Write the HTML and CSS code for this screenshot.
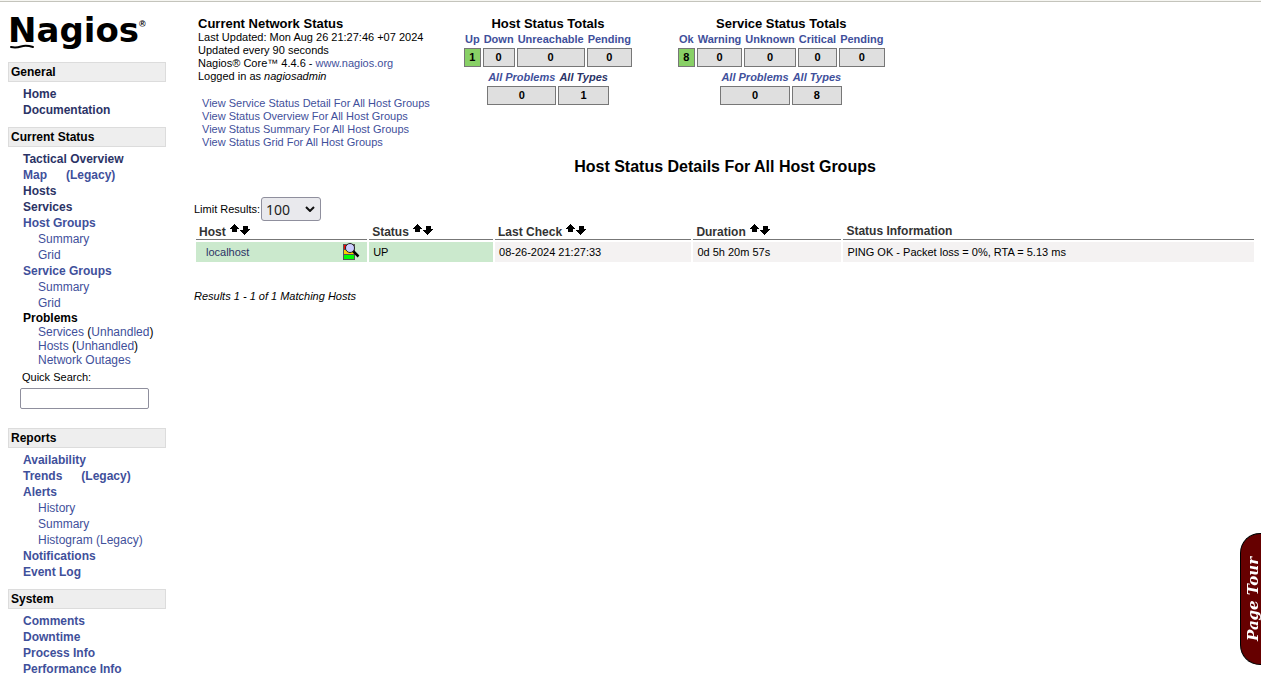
FILE: index.html
```html
<!DOCTYPE html>
<html lang="en">
<head>
<meta charset="utf-8">
<title>Nagios: Host Status</title>
<link rel="stylesheet" href="styles.css">
</head>
<body>
<svg class="defs" aria-hidden="true">
  <symbol id="sort" viewBox="0 0 22 14" shape-rendering="crispEdges">
    <path d="M5 1h1v1h1v1h1v1h1v1h1v1h-2v3h-5v-3h-2v-1h1v-1h1v-1h1v-1h1z"/>
    <path d="M14 3h5v3h2v1h-1v1h-1v1h-1v1h-1v1h-1v1h-1v-1h-1v-1h-1v-1h-1v-1h-1v-1h3z"/>
  </symbol>
</svg>
<div class="page">
  <nav class="side">
    <a class="logo" href="#" aria-label="Nagios">
      <svg width="140" height="38" viewBox="0 0 140 38">
        <text class="logo-name" x="0" y="28">Nagios</text>
        <text class="logo-mark" x="131" y="13">®</text>
        <path class="logo-line" d="M3 33q5 1 10-.5t12 .5"/>
      </svg>
    </a>
    <h2>General</h2>
    <ul>
      <li><a class="visited" href="#">Home</a></li>
      <li><a class="visited" href="#">Documentation</a></li>
    </ul>
    <h2>Current Status</h2>
    <ul class="status-menu">
      <li><a class="visited" href="#">Tactical Overview</a></li>
      <li class="pair"><a href="#">Map</a><a href="#">(Legacy)</a></li>
      <li><a class="visited" href="#">Hosts</a></li>
      <li><a class="visited" href="#">Services</a></li>
      <li><a href="#">Host Groups</a>
        <ul><li><a href="#">Summary</a></li><li><a href="#">Grid</a></li></ul></li>
      <li><a href="#">Service Groups</a>
        <ul><li><a href="#">Summary</a></li><li><a href="#">Grid</a></li></ul></li>
      <li class="tight">Problems
        <ul>
          <li><a href="#">Services</a> (<a href="#">Unhandled</a>)</li>
          <li><a href="#">Hosts</a> (<a href="#">Unhandled</a>)</li>
          <li><a href="#">Network Outages</a></li>
        </ul></li>
    </ul>
    <form class="search">
      <label for="q">Quick Search:</label>
      <input id="q" type="text">
    </form>
    <h2>Reports</h2>
    <ul>
      <li><a href="#">Availability</a></li>
      <li class="pair"><a href="#">Trends</a><a href="#">(Legacy)</a></li>
      <li><a href="#">Alerts</a>
        <ul><li><a href="#">History</a></li><li><a href="#">Summary</a></li><li><a href="#">Histogram (Legacy)</a></li></ul></li>
      <li><a href="#">Notifications</a></li>
      <li><a href="#">Event Log</a></li>
    </ul>
    <h2>System</h2>
    <ul>
      <li><a href="#">Comments</a></li>
      <li><a href="#">Downtime</a></li>
      <li><a href="#">Process Info</a></li>
      <li><a href="#">Performance Info</a></li>
    </ul>
  </nav>
  <main>
    <header class="top">
      <section class="info">
        <h3>Current Network Status</h3>
        <p>Last Updated: Mon Aug 26 21:27:46 +07 2024</p>
        <p>Updated every 90 seconds</p>
        <p>Nagios® Core™ 4.4.6 - <a href="#">www.nagios.org</a></p>
        <p>Logged in as <em>nagiosadmin</em></p>
        <div class="views">
          <a href="#">View Service Status Detail For All Host Groups</a>
          <a href="#">View Status Overview For All Host Groups</a>
          <a href="#">View Status Summary For All Host Groups</a>
          <a href="#">View Status Grid For All Host Groups</a>
        </div>
      </section>
      <section class="totals">
        <h3>Host Status Totals</h3>
        <table>
          <tr><th><a href="#">Up</a></th><th><a href="#">Down</a></th><th><a href="#">Unreachable</a></th><th><a href="#">Pending</a></th></tr>
          <tr><td class="good">1</td><td>0</td><td>0</td><td>0</td></tr>
        </table>
        <table class="all">
          <tr><th><a href="#">All Problems</a></th><th><a class="visited" href="#">All Types</a></th></tr>
          <tr><td>0</td><td>1</td></tr>
        </table>
      </section>
      <section class="totals">
        <h3>Service Status Totals</h3>
        <table>
          <tr><th><a href="#">Ok</a></th><th><a href="#">Warning</a></th><th><a href="#">Unknown</a></th><th><a href="#">Critical</a></th><th><a href="#">Pending</a></th></tr>
          <tr><td class="good">8</td><td>0</td><td>0</td><td>0</td><td>0</td></tr>
        </table>
        <table class="all">
          <tr><th><a href="#">All Problems</a></th><th><a href="#">All Types</a></th></tr>
          <tr><td>0</td><td>8</td></tr>
        </table>
      </section>
    </header>
    <h1>Host Status Details For All Host Groups</h1>
    <div class="limit">
      <label for="limit">Limit Results:</label>
      <span class="picker">
        <select id="limit"><option>50</option><option selected>100</option><option>250</option><option>All</option></select>
        <svg width="10" height="6" viewBox="0 0 10 6"><path d="M1 1l4 4 4-4"/></svg>
      </span>
    </div>
    <table class="hosts">
      <colgroup><col class="c-host"><col class="c-status"><col class="c-check"><col class="c-duration"><col></colgroup>
      <thead>
        <tr>
          <th>Host <svg class="sort"><use href="#sort"/></svg></th>
          <th>Status <svg class="sort"><use href="#sort"/></svg></th>
          <th>Last Check <svg class="sort"><use href="#sort"/></svg></th>
          <th>Duration <svg class="sort"><use href="#sort"/></svg></th>
          <th>Status Information</th>
        </tr>
      </thead>
      <tbody>
        <tr>
          <td class="up"><div class="name"><a class="visited" href="#">localhost</a>
            <svg width="18" height="18" viewBox="0 0 18 18">
              <g shape-rendering="crispEdges"><path fill="#555" d="M1 1h12v16H1z"/><path fill="#f00" d="M2 2h10v4H2z"/><path fill="#fc0" d="M2 7h10v4H2z"/><path fill="#0f0" d="M2 12h10v4H2z"/></g>
              <path d="M11 8l5.500 5.500" stroke="#000" stroke-width="2.500"/>
              <circle cx="8" cy="5" r="4.500" fill="#ccf" stroke="#222"/>
            </svg></div></td>
          <td class="up">UP</td>
          <td>08-26-2024 21:27:33</td>
          <td>0d 5h 20m 57s</td>
          <td>PING OK - Packet loss = 0%, RTA = 5.13 ms</td>
        </tr>
      </tbody>
    </table>
    <p class="results">Results 1 - 1 of 1 Matching Hosts</p>
  </main>
</div>
<button class="tour" type="button">Page Tour</button>
</body>
</html>
```
FILE: styles.css
```css
* { box-sizing: border-box; }
body {
  margin: 0;
  border-top: 1px solid #f6f6f2;
  font: 11px/13px "Liberation Sans", Arial, sans-serif;
  color: #000;
  background: #fff;
}
h1, h2, h3, p, ul { margin: 0; padding: 0; }
ul { list-style: none; }
a { color: #3f509b; text-decoration: none; }
a.visited { color: #2b3366; }
.defs { display: none; }
.page {
  display: grid;
  grid-template-columns: 158px minmax(0, 1fr);
  gap: 28px;
  height: calc(100vh - 1px);
  overflow: hidden;
  padding: 0 5px 0 8px;
  border-top: 1px solid #c4c4bc;
}

.side { padding-top: 12px; font-size: 12px; line-height: 16px; }
.logo { display: block; height: 48px; }
.logo svg { display: block; overflow: visible; }
.logo-name { font: bold 34px "DejaVu Sans", sans-serif; }
.logo-mark { font: bold 9px "Liberation Sans", sans-serif; }
.logo-line { fill: none; stroke: #000; stroke-width: 2; stroke-linecap: round; }
.side h2 {
  height: 20px;
  padding-left: 2px;
  border: 1px solid #dcdcdc;
  background: #eee;
  font-size: 12px;
  line-height: 18px;
}
.side > ul { padding: 4px 0 9px 15px; font-weight: bold; }
.side > .status-menu { padding-bottom: 2px; }
.side ul ul { padding-left: 15px; font-weight: normal; }
.pair { display: flex; gap: 19px; }
.side .tight { line-height: 14px; }
.search { display: grid; gap: 3px; padding: 0 12px 19px; font-size: 11px; }
.search label { padding-left: 2px; }
.search input {
  width: 129px;
  height: 21px;
  border: 1px solid #8f8f9d;
  border-radius: 2px;
  background: #fff;
}

.top { display: flex; align-items: flex-start; gap: 42px; padding-top: 15px; }
.info { width: 222px; margin-left: 4px; white-space: nowrap; }
.top h3 { font-size: 13px; line-height: 14px; }
.views { display: grid; padding: 14px 0 0 4px; }
.totals { display: flex; flex-direction: column; align-items: center; }
.totals table { border-spacing: 2px 1px; }
.totals th { height: 15px; padding: 0 1px; line-height: 13px; }
.totals td {
  height: 19px;
  padding: 0;
  border: 1px solid #777;
  background: #dfdfdf;
  font-weight: bold;
  text-align: center;
}
.totals td.good { background: #88d066; }
.totals .all th { height: 16px; font-style: italic; }

h1 { margin-top: 8px; font-size: 16px; line-height: 20px; text-align: center; }
.limit { display: flex; align-items: center; gap: 1px; margin-top: 20px; }
.picker { display: grid; align-items: center; justify-items: end; }
.picker > * { grid-area: 1 / 1; }
.picker svg { margin-right: 6px; fill: none; stroke: #111; stroke-width: 2; pointer-events: none; }
.limit select {
  appearance: none;
  width: 60px;
  height: 24px;
  padding: 0 4px;
  border: 1px solid #8f8f9d;
  border-radius: 3px;
  background: #e9e9ed;
  color: #222;
  font: 14px "Noto Sans", sans-serif;
}
.hosts { width: 100%; table-layout: fixed; border-spacing: 2px; }
.hosts th {
  height: 17px;
  padding: 0 3px;
  border-bottom: 1px solid #777;
  color: #333;
  font-size: 12px;
  line-height: 14px;
  text-align: left;
}
.hosts td { height: 20px; padding: 0 4px; background: #f4f2f2; }
.hosts td.up { background: #cbe9cd; }
.sort { width: 22px; height: 14px; vertical-align: -1px; }
.c-host { width: 16.3%; }
.c-status { width: 11.8%; }
.c-check { width: 18.7%; }
.c-duration { width: 14.1%; }
.name { display: flex; align-items: center; justify-content: space-between; padding: 0 3px 0 6px; }
.results { margin-top: 26px; font-style: italic; }

.tour {
  position: fixed;
  right: 0;
  bottom: 11px;
  width: 21px;
  height: 132px;
  padding: 0 4px 0 0;
  border: 1px solid #000;
  border-left: 0;
  border-radius: 0 20px 20px 0;
  background: #600;
  color: #fff;
  font: italic bold 15px/16px "DejaVu Serif", serif;
  writing-mode: vertical-rl;
  transform: rotate(180deg);
}
```
